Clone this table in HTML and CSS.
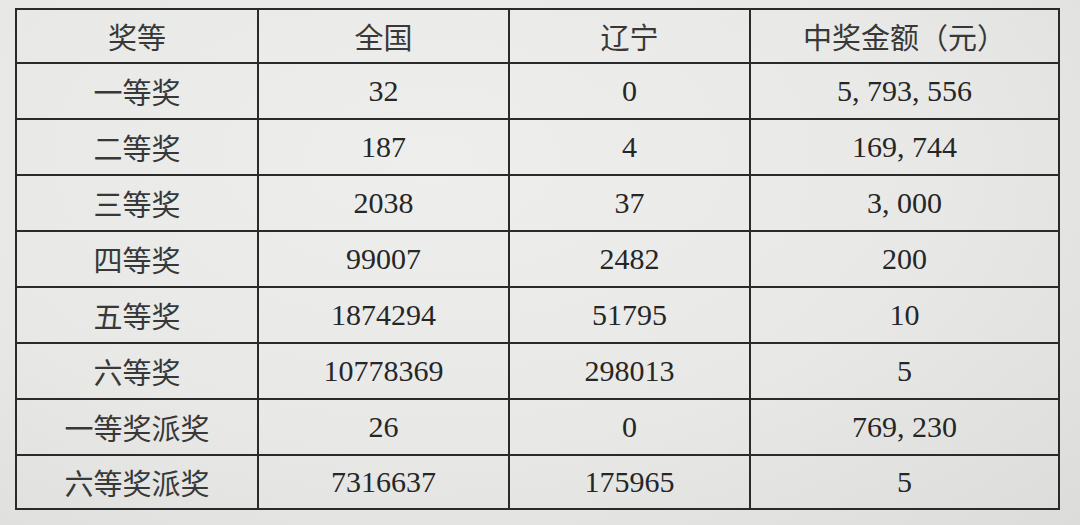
FILE: index.html
```html
<!DOCTYPE html>
<html lang="zh">
<head>
<meta charset="utf-8">
<link rel="stylesheet" href="styles.css">
</head>
<body>
<div class="paper">
<table class="prize">
  <colgroup>
    <col class="c1"><col class="c2"><col class="c3"><col class="c4">
  </colgroup>
  <tr class="head"><td>奖等</td><td>全国</td><td>辽宁</td><td>中奖金额（元）</td></tr>
  <tr><td>一等奖</td><td class="n">32</td><td class="n">0</td><td class="n">5, 793, 556</td></tr>
  <tr><td>二等奖</td><td class="n">187</td><td class="n">4</td><td class="n">169, 744</td></tr>
  <tr><td>三等奖</td><td class="n">2038</td><td class="n">37</td><td class="n">3, 000</td></tr>
  <tr><td>四等奖</td><td class="n">99007</td><td class="n">2482</td><td class="n">200</td></tr>
  <tr><td>五等奖</td><td class="n">1874294</td><td class="n">51795</td><td class="n">10</td></tr>
  <tr><td>六等奖</td><td class="n">10778369</td><td class="n">298013</td><td class="n">5</td></tr>
  <tr><td>一等奖派奖</td><td class="n">26</td><td class="n">0</td><td class="n">769, 230</td></tr>
  <tr class="last"><td>六等奖派奖</td><td class="n">7316637</td><td class="n">175965</td><td class="n">5</td></tr>
</table>
</div>
</body>
</html>
```
FILE: styles.css
```css
html, body {
  margin: 0;
  padding: 0;
}
body {
  width: 1080px;
  height: 525px;
  overflow: hidden;
  background: radial-gradient(ellipse at 40% 30%, #eeefed 0%, #e8e9e7 55%, #dcdddb 100%);
}
.paper {
  padding: 8px 0 0 15px;
}
.prize {
  border-collapse: collapse;
  table-layout: fixed;
  width: 1043px;
  color: #383838;
  font-family: "Noto Sans CJK SC", "Noto Sans", sans-serif;
  font-size: 29px;
}
.c1 { width: 242px; }
.c2 { width: 251px; }
.c3 { width: 241px; }
.c4 { width: 309px; }
.prize td {
  border: 2px solid #2a2a2a;
  height: 54px;
  padding: 0;
  text-align: center;
  vertical-align: middle;
  line-height: 1;
}
.prize tr.head td {
  height: 52px;
}
.prize tr.last td {
  height: 52px;
}
.prize td.n {
  font-family: "Liberation Serif", "Noto Sans CJK SC", serif;
  font-size: 30px;
  color: #262626;
}
```
